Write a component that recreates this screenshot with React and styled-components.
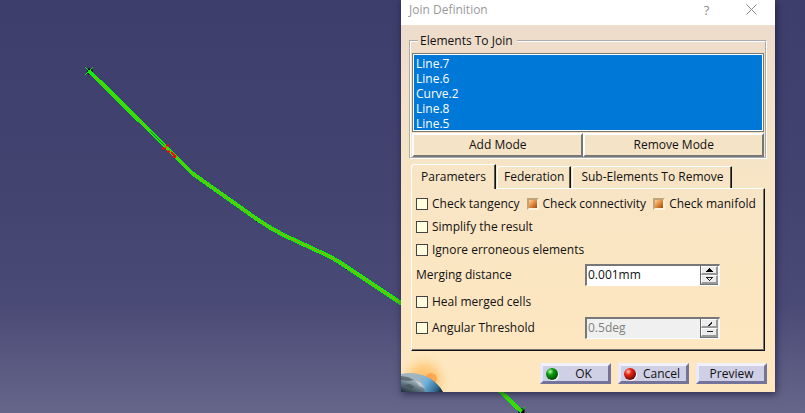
import React from "react";
import styled, { createGlobalStyle, css } from "styled-components";

const GlobalStyle = createGlobalStyle`
  *, *::before, *::after { box-sizing: border-box; }
  html, body, #root { height: 100%; }
  body { margin: 0; overflow: hidden; }
  body, button, input, select {
    font-family: "Open Sans", "Noto Sans", "Noto Sans CJK KR", sans-serif;
    font-size: 12px;
    line-height: 16px;
    color: #111;
  }
`;

const Viewport = styled.main`
  position: relative;
  min-height: 100%;
  display: grid;
  grid-template-columns: 401fr 374fr 30fr;
  align-items: start;
  background: linear-gradient(#3e3e6d 0%, #434370 45%, #4a4a76 74%, #66668b 100%);
`;

const Scene = styled.svg`
  position: absolute;
  top: 0;
  left: 0;
`;

const Dialog = styled.section`
  grid-column: 2;
  position: relative;
  min-width: 374px;
  box-shadow: 1px 2px 7px rgba(10, 10, 40, 0.6);
`;

const TitleBar = styled.header`
  display: flex;
  align-items: center;
  height: 25px;
  padding: 0 16px 6px 8px;
  background: #fff;
  color: #999;
`;

const Title = styled.h1`
  flex: 1;
  margin: 0;
  font-size: 12px;
  font-weight: 400;
`;

const TitleButton = styled.button`
  display: flex;
  align-items: center;
  justify-content: center;
  width: 15px;
  margin-left: 30px;
  padding: 0;
  border: 0;
  background: none;
  color: #888;
  font-size: 13px;
`;

const Body = styled.form`
  position: relative;
  padding: 8px 8px;
  background: linear-gradient(#eedccc 0%, #f6e4c6 36%, #fbe6c3 62%, #fee7bf 100%);
`;

const Group = styled.fieldset`
  margin: 0;
  padding: 4px 1px 0;
  min-width: 0;
  border: 2px groove #fff;
`;

const GroupTitle = styled.legend`
  margin-left: 6px;
  padding: 0 4px 0 2px;
`;

const ElementList = styled.select`
  display: block;
  width: 100%;
  height: 79px;
  padding: 1px;
  overflow: hidden;
  appearance: none;
  outline: 0;
  border: 1px solid #777;
  border-radius: 0;
  box-shadow: inset 0 0 0 1px #fff;
  background: #fff;

  option {
    height: 15px;
    min-height: 15px;
    padding: 0 2px;
    line-height: 14px;
    background: linear-gradient(#0078d7, #0078d7);
    -webkit-text-fill-color: #fff;
  }
`;

const ModeRow = styled.div`
  display: grid;
  grid-template-columns: 171fr 180fr;
  padding-top: 1px;
`;

const ModeButton = styled.button`
  height: 24px;
  padding: 0 0 1px;
  border: 2px solid;
  border-color: #fff #777 #777 #fff;
  background: transparent;
`;

const Tabs = styled.div`
  display: flex;
  align-items: flex-end;
  margin: 5px 2px 0;
`;

const Tab = styled.button`
  height: ${(p) => (p.$active ? 25 : 22)}px;
  margin-right: 1px;
  margin-bottom: ${(p) => (p.$active ? -1 : 0)}px;
  padding: 0 ${(p) => p.$pad}px ${(p) => (p.$active ? 0 : 1)}px;
  white-space: nowrap;
  border: solid;
  border-width: 1px 1px 0 1px;
  border-color: #fff #111 #fff #fff;
  border-radius: 3px 0 0 0;
  background: ${(p) => (p.$active ? "#f7e5c6" : "transparent")};
  box-shadow: inset -1px 0 #5a5650;
  z-index: 1;
`;

const Panel = styled.div`
  display: flex;
  flex-direction: column;
  margin: 0 2px;
  padding: 3px 4px 9px;
  border: solid;
  border-width: 1px;
  border-color: #fff #111 #111 #fff;
  box-shadow: inset -1px -1px #7a7570;
`;

const Row = styled.div`
  display: flex;
  align-items: center;
  height: ${(p) => p.$height || 23}px;
`;

const Options = styled.div`
  display: flex;
  gap: 7px;
`;

const CheckLabel = styled.label`
  display: flex;
  align-items: center;
  flex: ${(p) => (p.$grow ? 1 : "none")};
  gap: 4px;
  white-space: nowrap;
`;

const CheckBox = styled.input`
  appearance: none;
  width: 12px;
  height: 12px;
  margin: 0;
  border: 1px solid #444;
  background: #ffffdf;

  &:checked {
    border: 2px solid;
    border-color: #c0a377 #fff4dd #fff4dd #c0a377;
    background: linear-gradient(135deg, #ffd09a 0%, #e18a3c 50%, #9c4a0c 100%);
  }
`;

const FieldLabel = styled.label`
  flex: 1;
`;

const Spin = styled.div`
  display: flex;
  width: 135px;
  height: 22px;
  margin-right: 40px;
  border: solid;
  border-width: 2px 1px 1px 2px;
  border-color: #777 #fff #fff #777;
  background: ${(p) => (p.$disabled ? "#f0f0f0" : "#fff")};
`;

const SpinInput = styled.input`
  flex: 1;
  min-width: 0;
  padding: 0 0 2px 1px;
  border: 0;
  outline: 0;
  background: transparent;

  &:disabled { color: #808080; }
`;

const SpinButtons = styled.div`
  display: grid;
  grid-template-rows: 1fr 1fr;
  width: 18px;
  margin-right: 1px;
  padding-bottom: 1px;
  border-left: 1px solid #666;
  background: #777;
`;

const SpinButton = styled.button`
  display: flex;
  align-items: center;
  justify-content: center;
  min-height: 0;
  padding: 0;
  border: solid;
  border-width: 1px 2px 2px 1px;
  border-color: #fff #999 #999 #fff;
  background: #ececec;
`;

const Footer = styled.footer`
  position: relative;
  display: flex;
  justify-content: flex-end;
  gap: 7px;
  margin-top: 12px;
`;

const ActionButton = styled.button`
  display: flex;
  align-items: center;
  justify-content: center;
  width: 71px;
  height: 21px;
  padding: 0;
  border: 3px solid;
  border-color: #f0f0ff #74749a #74749a #e9e9fb;
  background: #cfcfe6;
  ${(p) =>
    p.$icon &&
    css`
      justify-content: flex-start;
      padding-left: 2px;
    `}
`;

const ActionText = styled.span`
  flex: 1;
  text-align: center;
`;

const Planet = styled.svg`
  position: absolute;
  left: 0;
  bottom: 0;
`;

const CURVE = "M89 71 L148 129 L192 173 L257 219 Q270 228 284 235 L325 254 Q338 260 350 269 L401 303 L501 392 L521 411";

function ModelCurve() {
  return (
    <Scene width="805" height="413" viewBox="0 0 805 413" fill="none" aria-hidden="true">
      <path d="M88 69h4v5h-4z M191 173l3 3 M256 222l3-4 M346 270l3-4 M519 409h5v4h-5z" stroke="#000" fill="#000" />
      <g transform="translate(0.5 0.5)">
        <path d={CURVE} stroke="#08f808" strokeWidth="4" shapeRendering="crispEdges" />
        <path d={CURVE} stroke="#e08008" strokeWidth="1" />
        <path d="M150 131 L164 145" stroke="#605040" strokeWidth="1" />
      </g>
      <path d="M85 67l9 9 M93 67l-8 8 M520 413l5-6" stroke="#08e808" />
      <path d="M162 148.500h4 M166 145.500h3 M167 151.500h3 M171 152l5 5 M173 157l3 0" stroke="#f00" strokeWidth="2" />
    </Scene>
  );
}

function PlanetArt() {
  return (
    <Planet width="56" height="40" viewBox="0 -4 56 40" aria-hidden="true">
      <defs>
        <radialGradient id="glow" cx="23" cy="24" r="27" gradientUnits="userSpaceOnUse">
          <stop offset="0" stopColor="#ffb658" />
          <stop offset="0.5" stopColor="#ffc97a" stopOpacity="0.8" />
          <stop offset="1" stopColor="#ffe2ae" stopOpacity="0" />
        </radialGradient>
        <linearGradient id="globe" x1="12" y1="17" x2="4" y2="38" gradientUnits="userSpaceOnUse">
          <stop offset="0" stopColor="#9fb6c0" />
          <stop offset="0.3" stopColor="#a3b3bb" />
          <stop offset="0.6" stopColor="#5f7480" />
          <stop offset="1" stopColor="#1c262e" />
        </linearGradient>
        <linearGradient id="sea" x1="16" y1="20" x2="40" y2="36" gradientUnits="userSpaceOnUse">
          <stop offset="0" stopColor="#7db9dd" stopOpacity="0" />
          <stop offset="0.4" stopColor="#6fb0da" />
          <stop offset="0.8" stopColor="#346a90" />
          <stop offset="1" stopColor="#1a2c3c" />
        </linearGradient>
      </defs>
      <rect y="-4" width="56" height="40" fill="url(#glow)" />
      <circle cx="30" cy="23" r="6" fill="#ff933b" opacity="0.65" />
      <path d="M0 18C15 14 33 21 42 36H0Z" fill="url(#globe)" />
      <path d="M14 17C26 19 36 25 42 36H24C23 29 18 23 14 17Z" fill="url(#sea)" />
      <path d="M0 20l7 1 6 3-5 1-8-1z M3 29l6-1 5 3-4 2z" fill="#434b50" opacity="0.6" />
      <path d="M14 24l6 3 4 5-6-2z" fill="#dbe3e6" opacity="0.6" />
    </Planet>
  );
}

function Ball({ id, light, mid, dark }) {
  return (
    <svg width="14" height="14" viewBox="0 0 14 14" aria-hidden="true">
      <defs>
        <radialGradient id={id} cx="0.35" cy="0.3" r="0.7">
          <stop offset="0" stopColor={light} />
          <stop offset="0.4" stopColor={mid} />
          <stop offset="1" stopColor={dark} />
        </radialGradient>
      </defs>
      <circle cx="8" cy="8" r="6" fill="#f7f7ff" />
      <circle cx="7" cy="7" r="6" fill={`url(#${id})`} />
    </svg>
  );
}

function Check({ label, checked, grow }) {
  return (
    <CheckLabel $grow={grow}>
      <CheckBox type="checkbox" defaultChecked={checked} />
      {label}
    </CheckLabel>
  );
}

function SpinBox({ id, value, disabled, label }) {
  return (
    <Spin $disabled={disabled}>
      <SpinInput id={id} defaultValue={value} disabled={disabled} aria-label={label} />
      <SpinButtons>
        <SpinButton type="button" disabled={disabled} aria-label="Increase">
          <svg width="9" height="5" viewBox="0 0 9 5" shapeRendering="crispEdges">
            {disabled ? <path d="M3 4h1V3h1V2h1V1" stroke="#222" fill="none" /> : <path d="M4 0h1v1h1v1h1v1h1v1H1V3h1V2h1V1h1z" fill="#000" />}
          </svg>
        </SpinButton>
        <SpinButton type="button" disabled={disabled} aria-label="Decrease">
          <svg width="9" height="5" viewBox="0 0 9 5" shapeRendering="crispEdges">
            {disabled ? <path d="M2 1h6v1H2z" fill="#222" /> : <path d="M1 0h7v1H7v1H6v1H5v1H4V3H3V2H2V1H1zM3 1v1h1v1h1V2h1V1z" fill="#222" fillRule="evenodd" />}
          </svg>
        </SpinButton>
      </SpinButtons>
    </Spin>
  );
}

const elements = ["Line.7", "Line.6", "Curve.2", "Line.8", "Line.5"];

export default function App() {
  return (
    <>
      <GlobalStyle />
      <Viewport>
        <ModelCurve />
        <Dialog role="dialog" aria-labelledby="dialog-title">
          <TitleBar>
            <Title id="dialog-title">Join Definition</Title>
            <TitleButton type="button">?</TitleButton>
            <TitleButton type="button" aria-label="Close">
              <svg width="11" height="11" viewBox="0 0 11 11" stroke="#888" fill="none">
                <path d="M.5 .5l10 10M10.5 .5l-10 10" />
              </svg>
            </TitleButton>
          </TitleBar>
          <Body onSubmit={(e) => e.preventDefault()}>
            <PlanetArt />
            <Group>
              <GroupTitle>Elements To Join</GroupTitle>
              <ElementList multiple size={5} defaultValue={elements} aria-label="Elements To Join">
                {elements.map((name) => (
                  <option key={name} value={name}>{name}</option>
                ))}
              </ElementList>
              <ModeRow>
                <ModeButton type="button">Add Mode</ModeButton>
                <ModeButton type="button">Remove Mode</ModeButton>
              </ModeRow>
            </Group>
            <Tabs role="tablist">
              <Tab type="button" role="tab" aria-selected="true" $active $pad={9}>Parameters</Tab>
              <Tab type="button" role="tab" aria-selected="false" $pad={6}>Federation</Tab>
              <Tab type="button" role="tab" aria-selected="false" $pad={8}>Sub-Elements To Remove</Tab>
            </Tabs>
            <Panel role="tabpanel">
              <Row as={Options}>
                <Check label="Check tangency" />
                <Check label="Check connectivity" checked />
                <Check label="Check manifold" checked />
              </Row>
              <Row><Check label="Simplify the result" /></Row>
              <Row><Check label="Ignore erroneous elements" /></Row>
              <Row $height={28}>
                <FieldLabel htmlFor="merging">Merging distance</FieldLabel>
                <SpinBox id="merging" value="0.001mm" />
              </Row>
              <Row $height={26}><Check label="Heal merged cells" /></Row>
              <Row $height={26}>
                <Check label="Angular Threshold" grow />
                <SpinBox id="angle" value="0.5deg" label="Angular threshold value" disabled />
              </Row>
            </Panel>
            <Footer>
              <ActionButton type="submit" $icon>
                <Ball id="ball-ok" light="#b9ffb0" mid="#0a9c10" dark="#034d06" />
                <ActionText>OK</ActionText>
              </ActionButton>
              <ActionButton type="button" $icon>
                <Ball id="ball-cancel" light="#ffc9b8" mid="#ea2414" dark="#6e0d06" />
                <ActionText>Cancel</ActionText>
              </ActionButton>
              <ActionButton type="button">Preview</ActionButton>
            </Footer>
          </Body>
        </Dialog>
      </Viewport>
    </>
  );
}
